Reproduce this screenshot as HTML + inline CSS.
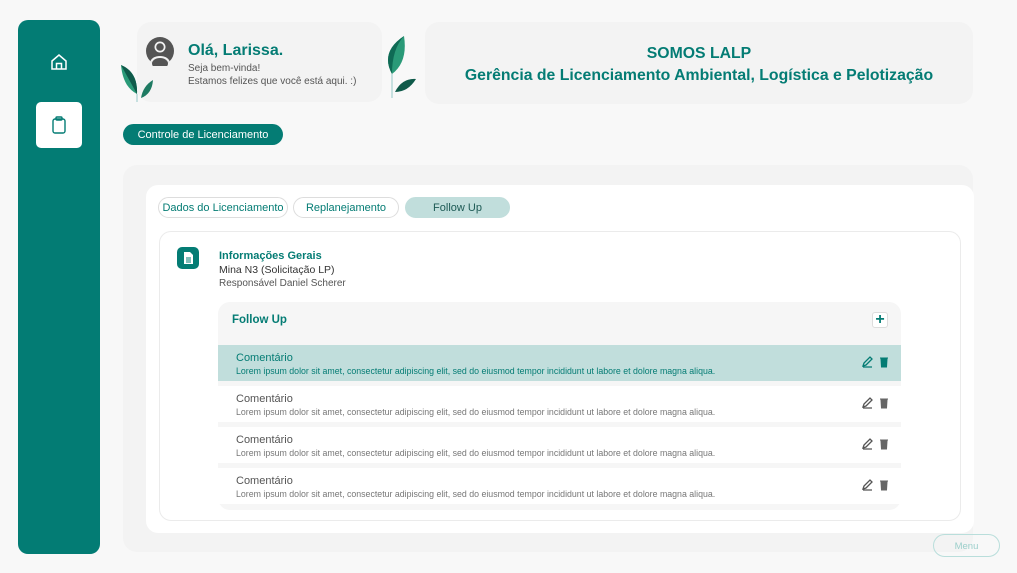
<!DOCTYPE html>
<html><head><meta charset="utf-8"><style>
*{margin:0;padding:0;box-sizing:border-box}
body{width:1017px;height:573px;background:#f8f8f8;font-family:"Liberation Sans",sans-serif;position:relative;overflow:hidden}
.abs{position:absolute}
.side{left:18px;top:20px;width:82px;height:534px;background:#037c74;border-radius:10px}
.card1{left:137px;top:22px;width:245px;height:80px;background:#f3f3f3;border-radius:14px}
.card2{left:425px;top:22px;width:548px;height:82px;background:#f3f3f3;border-radius:14px}
.teal{color:#047c74}
.btn{left:123px;top:124px;width:160px;height:21px;background:#047c74;border-radius:11px;color:#fff;font-size:11px;text-align:center;line-height:22px}
.outer{left:123px;top:165px;width:850px;height:387px;background:#f3f3f3;border-radius:14px}
.inner{left:146px;top:185px;width:828px;height:348px;background:#fff;border-radius:12px}
.tab{top:197px;height:21px;border-radius:11px;font-size:11px;text-align:center;line-height:21px;color:#047c74;border:1px solid #ddd;background:#fff}
.box{left:159px;top:231px;width:802px;height:290px;border:1px solid #ebebeb;border-radius:12px}
.fu{left:218px;top:302px;width:683px;height:208px;background:#f6f6f6;border-radius:12px}
.row{left:218px;width:683px;height:36px;background:#fff}
.row .t{position:absolute;left:18px;top:7px;font-size:11px;color:#555}
.row .d{position:absolute;left:18px;top:21px;font-size:8.8px;color:#777}
.row svg{position:absolute;top:11px}
</style></head><body>
<div class="abs side"></div>
<svg class="abs" style="left:50px;top:53px" width="18" height="18" viewBox="0 0 18 18" fill="none" stroke="#fff" stroke-width="1.5"><path d="M2 8 L9 2 L16 8 V16 H2 Z"/><path d="M6.5 16 V10.5 H11.5 V16"/></svg>
<div class="abs" style="left:36px;top:102px;width:46px;height:46px;background:#fff;border-radius:5px"></div>
<svg class="abs" style="left:51px;top:116px" width="16" height="18" viewBox="0 0 16 18" fill="none" stroke="#047c74" stroke-width="1.4"><rect x="2" y="3" width="12" height="14" rx="2"/><rect x="5" y="1" width="6" height="3" rx="1"/></svg>

<div class="abs card1"></div>
<svg class="abs" style="left:145px;top:36px" width="30" height="30" viewBox="0 0 30 30"><defs><clipPath id="c"><circle cx="15" cy="15" r="14"/></clipPath></defs><circle cx="15" cy="15" r="14" fill="#555"/><g clip-path="url(#c)" fill="#f3f3f3"><circle cx="15" cy="11" r="5.5"/><ellipse cx="15" cy="27" rx="10" ry="7"/></g><circle cx="15" cy="11" r="3.8" fill="#555"/><ellipse cx="15" cy="27.5" rx="8" ry="5.5" fill="#555"/></svg>
<div class="abs teal" style="left:188px;top:42px;font-size:16px;font-weight:bold">Olá, Larissa.</div>
<div class="abs" style="left:188px;top:63px;font-size:10px;color:#555;line-height:12.5px">Seja bem-vinda!<br>Estamos felizes que você está aqui. :)</div>
<svg class="abs" style="left:118px;top:62px" width="40" height="40" viewBox="0 0 40 40"><path d="M3 3 Q20 10 19 32 Q5 25 3 3Z" fill="#2a9a78"/><path d="M3 3 L19 32 Q20 10 3 3" fill="#0f5a4a"/><path d="M23 36 Q25 24 35 18 Q34 32 23 36Z" fill="#1e7a62"/><line x1="19" y1="32" x2="19" y2="40" stroke="#5aa" stroke-width="0.6"/></svg>
<svg class="abs" style="left:378px;top:34px" width="42" height="64" viewBox="0 0 42 64"><path d="M26 2 Q30 28 14 40 Q2 18 26 2Z" fill="#2a9a78"/><path d="M26 2 Q14 15 14 40 Q2 18 26 2Z" fill="#0f6a55"/><path d="M17 58 Q24 44 38 45 Q30 58 17 58Z" fill="#0f5a4a"/><line x1="14" y1="40" x2="14" y2="64" stroke="#5aa" stroke-width="0.6"/></svg>

<div class="abs card2"></div>
<div class="abs teal" style="left:425px;top:43px;width:548px;text-align:center;font-size:15.8px;font-weight:bold;line-height:22px">SOMOS LALP<br>Gerência de Licenciamento Ambiental, Logística e Pelotização</div>

<div class="abs btn">Controle de Licenciamento</div>
<div class="abs outer"></div>
<div class="abs inner"></div>
<div class="abs tab" style="left:158px;width:130px">Dados do Licenciamento</div>
<div class="abs tab" style="left:293px;width:106px">Replanejamento</div>
<div class="abs tab" style="left:405px;width:105px;background:#c1dedc;border-color:#c1dedc;color:#1d5a55">Follow Up</div>

<div class="abs box"></div>
<svg class="abs" style="left:177px;top:247px" width="22" height="22" viewBox="0 0 22 22"><rect width="22" height="22" rx="5" fill="#047c74"/><path d="M7 5 H13 L16 8 V17 H7 Z" fill="#fff"/><path d="M9 11 H14 M9 13 H14 M9 15 H14" stroke="#047c74" stroke-width="1"/></svg>
<div class="abs teal" style="left:219px;top:250px;font-size:11px;font-weight:bold">Informações Gerais</div>
<div class="abs" style="left:219px;top:264px;font-size:10.5px;color:#333">Mina N3 (Solicitação LP)</div>
<div class="abs" style="left:219px;top:278px;font-size:10px;color:#555">Responsável Daniel Scherer</div>

<div class="abs fu"></div>
<div class="abs teal" style="left:232px;top:314px;font-size:11.5px;font-weight:bold">Follow Up</div>
<div class="abs" style="left:872px;top:312px;width:16px;height:16px;background:#fff;border:1px solid #ddd;border-radius:3px;color:#047c74;font-size:16px;font-weight:bold;line-height:13px;text-align:center">+</div>

<div class="abs row" style="top:345px;background:#c1dedc"><div class="t" style="color:#047c74">Comentário</div><div class="d" style="color:#047c74">Lorem ipsum dolor sit amet, consectetur adipiscing elit, sed do eiusmod tempor incididunt ut labore et dolore magna aliqua.</div>
<svg style="left:644px" width="28" height="12" viewBox="0 0 28 12"><path d="M1 10 L2 7 L8 1 L10 3 L4 9 Z M1 11 H10" fill="none" stroke="#047c74" stroke-width="1.3"/><path d="M18 2 H26 M19 3 H25 L24.5 11 H19.5Z" fill="#047c74" stroke="#047c74"/></svg></div>
<div class="abs row" style="top:386px"><div class="t">Comentário</div><div class="d">Lorem ipsum dolor sit amet, consectetur adipiscing elit, sed do eiusmod tempor incididunt ut labore et dolore magna aliqua.</div>
<svg style="left:644px" width="28" height="12" viewBox="0 0 28 12"><path d="M1 10 L2 7 L8 1 L10 3 L4 9 Z M1 11 H10" fill="none" stroke="#555" stroke-width="1.3"/><path d="M18 2 H26 M19 3 H25 L24.5 11 H19.5Z" fill="#666" stroke="#666"/></svg></div>
<div class="abs row" style="top:427px"><div class="t">Comentário</div><div class="d">Lorem ipsum dolor sit amet, consectetur adipiscing elit, sed do eiusmod tempor incididunt ut labore et dolore magna aliqua.</div>
<svg style="left:644px" width="28" height="12" viewBox="0 0 28 12"><path d="M1 10 L2 7 L8 1 L10 3 L4 9 Z M1 11 H10" fill="none" stroke="#555" stroke-width="1.3"/><path d="M18 2 H26 M19 3 H25 L24.5 11 H19.5Z" fill="#666" stroke="#666"/></svg></div>
<div class="abs row" style="top:468px"><div class="t">Comentário</div><div class="d">Lorem ipsum dolor sit amet, consectetur adipiscing elit, sed do eiusmod tempor incididunt ut labore et dolore magna aliqua.</div>
<svg style="left:644px" width="28" height="12" viewBox="0 0 28 12"><path d="M1 10 L2 7 L8 1 L10 3 L4 9 Z M1 11 H10" fill="none" stroke="#555" stroke-width="1.3"/><path d="M18 2 H26 M19 3 H25 L24.5 11 H19.5Z" fill="#666" stroke="#666"/></svg></div>

<div class="abs" style="left:933px;top:534px;width:67px;height:23px;border:1px solid #b9dedb;border-radius:12px;color:#9ccfcb;font-size:9.5px;text-align:center;line-height:23px">Menu</div>
</body></html>
